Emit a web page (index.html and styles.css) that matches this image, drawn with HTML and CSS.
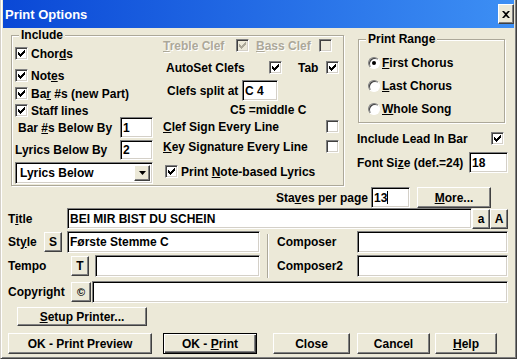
FILE: index.html
```html
<!DOCTYPE html>
<html lang="en">
<head>
    <meta charset="UTF-8">
    <title>Print Options</title>
    <link rel="stylesheet" href="styles.css">
</head>
<body>

<div class="window">
    <div class="titlebar">
        <span class="title-text">Print Options</span>
        <button class="close-btn">
            <svg width="8" height="7" viewBox="0 0 8 7"><path d="M0 0h2l2 2 2-2h2L5 3.5 8 7H6L4 5 2 7H0l3-3.5z" fill="#000"/></svg>
        </button>
    </div>

    <div class="content">
        <div class="top">
            <div class="group include">
                <span class="group-label">Include</span>
                <div class="col-left">
                    <div class="check-row r-chords"><span class="cb on"></span><span class="cb-text">Chor<u>d</u>s</span></div>
                    <div class="check-row r-notes"><span class="cb on"></span><span class="cb-text">Not<u>e</u>s</span></div>
                    <div class="check-row r-bars"><span class="cb on"></span><span class="cb-text">Ba<u>r</u> #s (new Part)</span></div>
                    <div class="check-row r-staff"><span class="cb on"></span><span class="cb-text">Staff lines</span></div>
                    <div class="field-row r-barby"><span class="lbl-barby">Bar <u>#</u>s Below By</span><input class="field small" value="1"></div>
                    <div class="field-row r-lyrby"><span class="lbl-lyrby">Lyrics Below By</span><input class="field small" value="2"></div>
                    <div class="combo">
                        <span class="combo-text">Lyrics Below</span>
                        <span class="combo-btn"><svg width="7" height="4" viewBox="0 0 7 4"><path d="M0 0h7L3.5 4z" fill="#000"/></svg></span>
                    </div>
                </div>
                <div class="col-mid">
                    <div class="check-row r-treble disabled">
                        <span class="mid-lbl w-treble"><u>T</u>reble Clef</span><span class="cb on"></span>
                        <span class="mid-lbl w-bass"><u>B</u>ass Clef</span><span class="cb"></span>
                    </div>
                    <div class="check-row r-autoset">
                        <span class="mid-lbl w-autoset">AutoSet Clefs</span><span class="cb on"></span>
                        <span class="mid-lbl w-tab">Tab</span><span class="cb on"></span>
                    </div>
                    <div class="field-row r-split"><span class="lbl-split">Clefs split at</span><input class="field split" value="C 4"></div>
                    <div class="r-c5">C5 =middle C</div>
                    <div class="check-row r-clefsign"><span class="mid-lbl w-long"><u>C</u>lef Sign Every Line</span><span class="cb"></span></div>
                    <div class="check-row r-keysig"><span class="mid-lbl w-long"><u>K</u>ey Signature Every Line</span><span class="cb"></span></div>
                    <div class="check-row r-notelyr"><span class="cb on"></span><span class="cb-text">Print <u>N</u>ote-based Lyrics</span></div>
                </div>
            </div>

            <div class="right-col">
                <div class="group range">
                    <span class="group-label">Print Range</span>
                    <div class="radio-row"><span class="radio on"></span><span class="cb-text"><u>F</u>irst Chorus</span></div>
                    <div class="radio-row"><span class="radio"></span><span class="cb-text"><u>L</u>ast Chorus</span></div>
                    <div class="radio-row"><span class="radio"></span><span class="cb-text"><u>W</u>hole Song</span></div>
                </div>
                <div class="check-row r-lead"><span>Include Lead In Bar</span><span class="cb on"></span></div>
                <div class="field-row r-font"><span>Font Si<u>z</u>e (def.=24)</span><input class="field fontsize" value="18"></div>
            </div>
        </div>

        <div class="staves-row">
            <span class="staves-lbl">Sta<u>v</u>es per page</span>
            <div class="field staves">13<span class="caret"></span></div>
            <button class="btn more"><u>M</u>ore...</button>
        </div>

        <div class="row title-row">
            <span class="row-lbl w-title">T<u>i</u>tle</span>
            <input class="field title-field" value="BEI MIR BIST DU SCHEIN">
            <button class="btn case">a</button>
            <button class="btn case">A</button>
        </div>

        <div class="meta">
            <div class="meta-left">
                <div class="row">
                    <span class="row-lbl w-style">St<u>y</u>le</span>
                    <button class="btn tiny">S</button>
                    <input class="field style-field" value="Første Stemme C">
                </div>
                <div class="row row-gap">
                    <span class="row-lbl w-tempo">Tempo</span>
                    <button class="btn tiny">T</button>
                    <input class="field tempo-field" value="">
                </div>
            </div>
            <div class="separator"></div>
            <div class="meta-right">
                <div class="row">
                    <span class="row-lbl w-composer">Composer</span>
                    <input class="field composer-field" value="">
                </div>
                <div class="row row-gap">
                    <span class="row-lbl w-composer">Composer2</span>
                    <input class="field composer-field" value="">
                </div>
            </div>
        </div>

        <div class="row copyright-row">
            <span class="row-lbl w-tempo">Copyright</span>
            <button class="btn copy">&copy;</button>
            <input class="field copy-field" value="">
        </div>

        <div class="setup-row">
            <button class="btn setup"><u>S</u>etup Printer...</button>
        </div>

        <div class="buttons">
            <button class="btn b-preview">OK - Print Preview</button>
            <button class="btn default b-print">OK - <u>P</u>rint</button>
            <button class="btn b-close">Close</button>
            <button class="btn b-cancel">Cancel</button>
            <button class="btn b-help"><u>H</u>elp</button>
        </div>
    </div>
</div>

</body>
</html>
```

FILE: styles.css
```css
body {
    margin: 0;
    background-color: #ece9d8;
    font-family: "Liberation Sans", Arial, sans-serif;
    font-size: 12px;
    font-weight: bold;
    color: #000;
}
.window {
    width: 517px;
    height: 359px;
    box-sizing: border-box;
    background-color: #ece9d8;
    border-left: 1px solid #d4d0c8;
    border-right: 1px solid #404040;
    border-bottom: 1px solid #404040;
    padding: 0 2px 2px 2px;
    box-shadow: inset 1px 0 #fff, inset -1px -1px #808080;
}
.titlebar {
    height: 28px;
    display: flex;
    align-items: center;
    background: linear-gradient(to right, #0a48d6, #3d8ff4);
    padding-left: 2px;
}
.title-text {
    color: #fff;
    font-size: 13px;
    flex: 1;
}
.close-btn {
    width: 16px;
    height: 20px;
    padding: 0;
    background-color: #ece9d8;
    border: 1px solid;
    border-color: #fff #404040 #404040 #fff;
    box-shadow: inset -1px -1px #808080;
    display: flex;
    align-items: center;
    justify-content: center;
}

.content {
    padding: 0 6px 0 5px;
}
.top {
    display: flex;
    height: 158px;
}

/* group boxes */
.group {
    position: relative;
    box-sizing: border-box;
    border: 1px solid #aca899;
    box-shadow: inset 1px 1px #fff, 1px 1px #fff;
}
.group-label {
    position: absolute;
    top: -8px;
    left: 7px;
    padding: 0 2px;
    line-height: 14px;
    background-color: #ece9d8;
}
.include {
    display: flex;
    margin: 7px 0 0 3px;
    width: 333px;
    height: 151px;
    padding-left: 3px;
}
.col-left {
    width: 138px;
    padding-top: 11px;
}
.col-mid {
    width: 177px;
    margin-left: 10px;
}

/* check boxes */
.check-row {
    display: flex;
    align-items: center;
    height: 13px;
}
.cb {
    position: relative;
    flex: none;
    width: 13px;
    height: 13px;
    box-sizing: border-box;
    background-color: #fff;
    border: 1px solid;
    border-color: #808080 #fff #fff #808080;
    box-shadow: inset 1px 1px #404040, inset -1px -1px #d4d0c8;
}
.cb.on::after {
    content: "";
    position: absolute;
    left: 2px;
    top: 2px;
    width: 7px;
    height: 7px;
    background: url("data:image/svg+xml,%3Csvg xmlns='http://www.w3.org/2000/svg' width='7' height='7' viewBox='0 0 7 7'%3E%3Cpath d='M0 2h1v1h1v1h1V3h1V2h1V1h1V0h1v3H6v1H5v1H4v1H3v1H2V6H1V5H0z' fill='%23000'/%3E%3C/svg%3E");
}
.cb-text {
    margin-left: 3px;
}
.disabled {
    color: #aca899;
    text-shadow: 1px 1px #fff;
}
.disabled .cb {
    background-color: #ece9d8;
}
.disabled .cb.on::after {
    background: url("data:image/svg+xml,%3Csvg xmlns='http://www.w3.org/2000/svg' width='7' height='7' viewBox='0 0 7 7'%3E%3Cpath d='M0 2h1v1h1v1h1V3h1V2h1V1h1V0h1v3H6v1H5v1H4v1H3v1H2V6H1V5H0z' fill='%23aca899'/%3E%3C/svg%3E");
}

.r-notes { margin-top: 9px; }
.r-bars { margin-top: 5px; }
.r-staff { margin-top: 4px; }

/* fields */
.field {
    box-sizing: border-box;
    background-color: #fff;
    border: 1px solid;
    border-color: #808080 #fff #fff #808080;
    box-shadow: inset 1px 1px #000, inset -1px -1px #d4d0c8;
    font-family: inherit;
    font-size: 12px;
    font-weight: bold;
    color: #000;
    padding: 0 2px;
    margin: 0;
    outline: none;
}
.field-row {
    display: flex;
    align-items: center;
}
.r-barby { height: 21px; }
.r-lyrby { height: 20px; margin-top: 2px; }
.lbl-barby {
    width: 105px;
    padding-left: 3px;
}
.lbl-lyrby {
    width: 105px;
    padding-left: 0;
}
.small {
    width: 33px;
    height: 100%;
}
.combo {
    display: flex;
    align-items: center;
    box-sizing: border-box;
    height: 22px;
    margin-top: 2px;
    background-color: #fff;
    border: 1px solid;
    border-color: #808080 #fff #fff #808080;
    box-shadow: inset 1px 1px #000, inset -1px -1px #d4d0c8;
    padding: 2px 2px 2px 4px;
}
.combo-text {
    flex: 1;
}
.combo-btn {
    width: 16px;
    height: 16px;
    box-sizing: border-box;
    display: flex;
    align-items: center;
    justify-content: center;
    background-color: #ece9d8;
    border: 1px solid;
    border-color: #fff #404040 #404040 #fff;
    box-shadow: inset -1px -1px #808080;
}

/* middle column */
.mid-lbl {
    flex: none;
}
.r-treble { margin-top: 3px; }
.w-treble { width: 73px; }
.w-bass { width: 63px; margin-left: 7px; }
.r-autoset { margin-top: 9px; padding-left: 3px; }
.w-autoset { width: 103px; }
.w-tab { width: 28px; margin-left: 16px; }
.r-split { height: 21px; margin-top: 6px; padding-left: 4px; }
.lbl-split { width: 75px; }
.split { width: 36px; height: 100%; }
.r-c5 { margin-top: 3px; padding-left: 67px; line-height: 13px; }
.r-clefsign { margin-top: 3px; }
.r-keysig { margin-top: 7px; }
.w-long { width: 163px; }
.r-notelyr { margin-top: 12px; padding-left: 2px; }

/* right column */
.right-col {
    width: 151px;
    margin-left: 13px;
}
.range {
    width: 147px;
    height: 84px;
    margin: 11px 0 0 1px;
    padding: 11px 0 0 9px;
}
.radio-row {
    display: flex;
    align-items: center;
    height: 23px;
}
.radio {
    position: relative;
    flex: none;
    width: 12px;
    height: 12px;
    box-sizing: border-box;
    border-radius: 50%;
    background-color: #fff;
    border: 1px solid;
    border-color: #808080 #fff #fff #808080;
    box-shadow: inset 1px 1px #404040;
}
.radio.on::after {
    content: "";
    position: absolute;
    left: 3px;
    top: 3px;
    width: 4px;
    height: 4px;
    border-radius: 50%;
    background-color: #000;
}
.radio-row .cb-text {
    margin-left: 2px;
}
.r-lead {
    margin-top: 9px;
    justify-content: space-between;
    padding-right: 4px;
}
.r-font {
    height: 21px;
    margin-top: 7px;
    justify-content: space-between;
}
.fontsize {
    width: 39px;
    height: 100%;
}

/* buttons */
.btn {
    box-sizing: border-box;
    background-color: #ece9d8;
    border: 1px solid;
    border-color: #fff #404040 #404040 #fff;
    box-shadow: inset -1px -1px #808080;
    font-family: inherit;
    font-size: 12px;
    font-weight: bold;
    color: #000;
    padding: 0;
    margin: 0;
}
.btn.default {
    border-color: #000;
    box-shadow: inset 1px 1px #fff, inset -1px -1px #404040, inset -2px -2px #808080;
}

.staves-row {
    display: flex;
    align-items: center;
    justify-content: flex-end;
    height: 21px;
    margin-top: 1px;
    padding-right: 17px;
}
.staves-lbl {
    margin-right: 3px;
}
.staves {
    display: flex;
    align-items: center;
    width: 39px;
    height: 21px;
}
.caret {
    width: 1px;
    height: 13px;
    background-color: #000;
}
.more {
    width: 74px;
    height: 21px;
    margin-left: 7px;
}

.row {
    display: flex;
    align-items: center;
    height: 22px;
}
.row-gap {
    margin-top: 2px;
}
.row-lbl {
    flex: none;
}
.title-row {
    height: 21px;
}
.w-title { width: 59px; }
.title-field {
    width: 405px;
    height: 21px;
}
.case {
    width: 18px;
    height: 20px;
}
.meta {
    display: flex;
    margin-top: 2px;
}
.meta-left {
    width: 252px;
}
.w-style { width: 36px; }
.w-tempo { width: 63px; }
.tiny {
    width: 18px;
    height: 20px;
}
.style-field {
    width: 193px;
    height: 22px;
    margin-left: 5px;
}
.tempo-field {
    width: 165px;
    height: 22px;
    margin-left: 6px;
}
.separator {
    width: 1px;
    height: 44px;
    margin: 3px 8px 0 7px;
    border-left: 1px solid #aca899;
    border-right: 1px solid #fff;
}
.meta-right {
    width: 231px;
}
.w-composer { width: 80px; }
.composer-field {
    width: 151px;
    height: 22px;
}
.copyright-row {
    margin-top: 3px;
}
.copy {
    width: 20px;
    height: 20px;
    font-size: 11px;
}
.copy-field {
    width: 416px;
    height: 22px;
    margin-left: 1px;
}
.setup-row {
    margin-top: 4px;
    padding-left: 9px;
}
.setup {
    width: 130px;
    height: 19px;
}
.buttons {
    display: flex;
    margin-top: 7px;
}
.buttons .btn {
    height: 21px;
}
.b-preview { width: 144px; }
.b-print { width: 94px; margin-left: 11px; }
.b-close { width: 77px; margin-left: 16px; }
.b-cancel { width: 73px; margin-left: 7px; }
.b-help { width: 62px; margin-left: 5px; }
```
